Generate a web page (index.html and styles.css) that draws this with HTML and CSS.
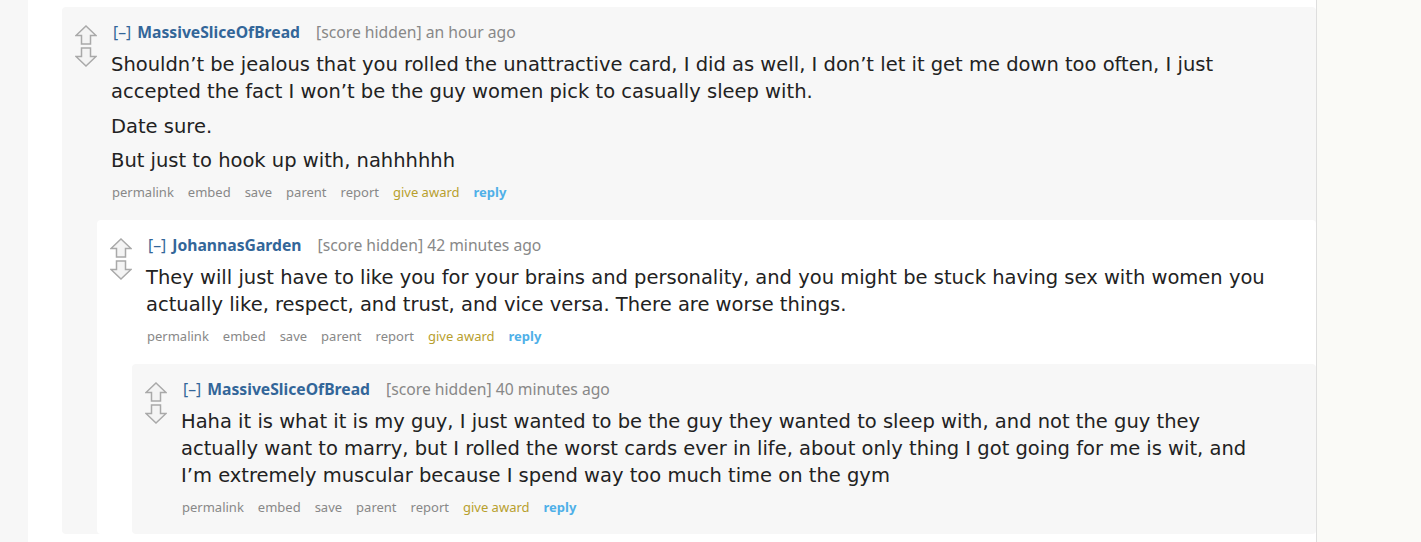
FILE: index.html
```html
<!DOCTYPE html>
<html lang="en">
<head>
  <meta charset="UTF-8">
  <title>comments</title>
  <link rel="stylesheet" href="styles.css">
</head>
<body>

<div class="page">
  <div class="gutter"></div>

  <div class="content">
    <div class="comment">
      <div class="row">
        <div class="midcol">
          <svg class="arrow" viewBox="0 0 22 20"><polygon points="11,1 21,10.5 15.5,10.5 15.5,19 6.5,19 6.5,10.5 1,10.5"/></svg>
          <svg class="arrow" viewBox="0 0 22 20"><polygon points="11,19 21,9.5 15.5,9.5 15.5,1 6.5,1 6.5,9.5 1,9.5"/></svg>
        </div>
        <div class="entry">
          <p class="tagline"><span class="expand">[–]</span> <a class="author">MassiveSliceOfBread</a> <span class="score">[score hidden]</span> an hour ago</p>
          <div class="md">
            <p>Shouldn’t be jealous that you rolled the unattractive card, I did as well, I don’t let it get me down too often, I just accepted the fact I won’t be the guy women pick to casually sleep with.</p>
            <p>Date sure.</p>
            <p>But just to hook up with, nahhhhhh</p>
          </div>
          <ul class="buttons">
            <li>permalink</li><li>embed</li><li>save</li><li>parent</li><li>report</li><li class="award">give award</li><li class="reply">reply</li>
          </ul>
        </div>
      </div>

      <div class="child">
        <div class="comment odd">
          <div class="row">
            <div class="midcol">
              <svg class="arrow" viewBox="0 0 22 20"><polygon points="11,1 21,10.5 15.5,10.5 15.5,19 6.5,19 6.5,10.5 1,10.5"/></svg>
              <svg class="arrow" viewBox="0 0 22 20"><polygon points="11,19 21,9.5 15.5,9.5 15.5,1 6.5,1 6.5,9.5 1,9.5"/></svg>
            </div>
            <div class="entry">
              <p class="tagline"><span class="expand">[–]</span> <a class="author">JohannasGarden</a> <span class="score">[score hidden]</span> 42 minutes ago</p>
              <div class="md">
                <p>They will just have to like you for your brains and personality, and you might be stuck having sex with women you actually like, respect, and trust, and vice versa. There are worse things.</p>
              </div>
              <ul class="buttons">
                <li>permalink</li><li>embed</li><li>save</li><li>parent</li><li>report</li><li class="award">give award</li><li class="reply">reply</li>
              </ul>
            </div>
          </div>

          <div class="child">
            <div class="comment">
              <div class="row">
                <div class="midcol">
                  <svg class="arrow" viewBox="0 0 22 20"><polygon points="11,1 21,10.5 15.5,10.5 15.5,19 6.5,19 6.5,10.5 1,10.5"/></svg>
                  <svg class="arrow" viewBox="0 0 22 20"><polygon points="11,19 21,9.5 15.5,9.5 15.5,1 6.5,1 6.5,9.5 1,9.5"/></svg>
                </div>
                <div class="entry">
                  <p class="tagline"><span class="expand">[–]</span> <a class="author">MassiveSliceOfBread</a> <span class="score">[score hidden]</span> 40 minutes ago</p>
                  <div class="md">
                    <p>Haha it is what it is my guy, I just wanted to be the guy they wanted to sleep with, and not the guy they actually want to marry, but I rolled the worst cards ever in life, about only thing I got going for me is wit, and I’m extremely muscular because I spend way too much time on the gym</p>
                  </div>
                  <ul class="buttons">
                    <li>permalink</li><li>embed</li><li>save</li><li>parent</li><li>report</li><li class="award">give award</li><li class="reply">reply</li>
                  </ul>
                </div>
              </div>
            </div>
          </div>
        </div>
      </div>
    </div>
  </div>

  <aside class="side"></aside>
</div>

</body>
</html>
```

FILE: styles.css
```css
body {
  margin: 0;
  font-family: "Noto Sans", "Open Sans", Arial, sans-serif;
  background: #fff;
  color: #222;
}

.page {
  display: flex;
  height: 542px;
  overflow: hidden;
}

.gutter {
  width: 28px;
  flex: none;
  background: #f7f7f7;
}

.content {
  flex: none;
  width: 1288px;
  background: #fff;
  padding: 7px 0 0 34px;
  box-sizing: border-box;
}

.side {
  flex: 1;
  background: #fafaf7;
  border-left: 1px solid #dedede;
}

.comment {
  background: #f7f7f7;
  border-radius: 4px;
}

.comment.odd {
  background: #fff;
}

.row {
  display: flex;
  padding-top: 15px;
}

.midcol {
  width: 22px;
  margin-left: 13px;
  flex: none;
  padding-top: 3px;
}

.arrow {
  display: block;
  width: 22px;
  height: 20px;
  margin-bottom: 2px;
  fill: #f4f4f4;
  stroke: #a9a9a9;
  stroke-width: 1.5;
}

.entry {
  margin-left: 14px;
  padding-right: 40px;
  flex: 1;
}

.tagline {
  margin: 0 0 0 2px;
  font-size: 15.7px;
  line-height: 20px;
  color: #888;
}

.expand {
  color: #336699;
  margin-right: 2px;
}

.author {
  color: #336699;
  font-weight: bold;
  margin-right: 12px;
}

.md {
  margin-top: 9px;
  font-family: "DejaVu Sans", Verdana, sans-serif;
  font-size: 19.5px;
  line-height: 27px;
  color: #222;
}

.md p {
  margin: 0 0 7.5px;
}

.md p:last-child {
  margin-bottom: 0;
}

.buttons {
  list-style: none;
  margin: 9px 0 0 1px;
  padding: 0 0 18px;
  display: flex;
  gap: 14px;
  font-size: 13px;
  line-height: 18px;
  color: #888;
}

.buttons .award {
  color: #b8a02e;
}

.buttons .reply {
  color: #4fb0e8;
  font-weight: bold;
}

.child {
  margin-left: 35px;
  margin-top: 1px;
}
```
